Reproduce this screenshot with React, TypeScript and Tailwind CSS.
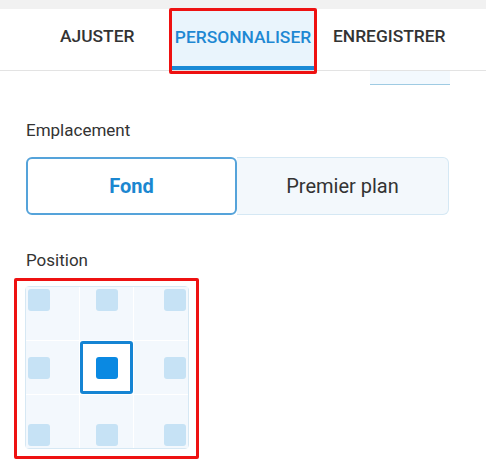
const cells = [
  'justify-start items-start',
  'justify-center items-start',
  'justify-end items-start',
  'justify-start items-center',
  'justify-center items-center',
  'justify-end items-center',
  'justify-start items-end',
  'justify-center items-end',
  'justify-end items-end',
];

export default function App() {
  return (
    <div className="relative w-[486px] h-[470px] overflow-hidden bg-white font-['Roboto',sans-serif] text-[#333]">
      <div className="h-[9px] bg-[#f1f1f1]" />

      {/* tabs */}
      <div className="flex h-[62px] items-stretch border-b border-[#e3e3e3] text-[17.4px] font-medium">
        <div className="ml-[60px] flex w-[74px] items-center pb-[6px]">AJUSTER</div>
        <div className="ml-[38px] mt-[2px] flex w-[142px] items-center justify-center border-b-4 border-[#1a8ad6] bg-[#e9f4fc] pb-[2px] text-[#1e88d3]">
          PERSONNALISER
        </div>
        <div className="ml-[19px] flex items-center pb-[6px]">ENREGISTRER</div>
      </div>

      <div className="ml-[370px] h-[14px] w-[80px] border-b border-[#9fcbe3] bg-[#f3f9fe]" />

      <div className="px-[26px]">
        <p className="mt-[35px] text-[17px] leading-[20px]">Emplacement</p>

        <div className="mt-[17px] flex h-[58px] w-[423px]">
          <button className="flex w-[211px] items-center justify-center rounded-[6px] border-2 border-[#55a3da] bg-white text-[20px] font-bold text-[#1b87d0]">
            Fond
          </button>
          <button className="flex flex-1 items-center justify-center rounded-r-[6px] border border-l-0 border-[#d5e8f4] bg-[#f3f8fc] text-[20px] text-[#333]">
            Premier plan
          </button>
        </div>

        <p className="mt-[35px] text-[17px] leading-[20px]">Position</p>
      </div>

      <div className="ml-[25px] mt-[16px] grid w-[164px] grid-cols-[53px_53px_54px] grid-rows-[53px_53px_53px] gap-px rounded-[4px] border border-[#d6e8f4] bg-white">
        {cells.map((c, i) =>
          i === 4 ? (
            <div key={i} className="flex items-center justify-center rounded-[3px] border-[3px] border-[#1584d3] bg-white">
              <div className="h-[22px] w-[22px] rounded-[3px] bg-[#0a89e2]" />
            </div>
          ) : (
            <div key={i} className={`flex bg-[#f3f8fd] p-[2px] ${c}`}>
              <div className="h-[22px] w-[22px] rounded-[3px] bg-[#c6e2f5]" />
            </div>
          )
        )}
      </div>

      {/* highlight overlays */}
      <div className="absolute left-[169px] top-[8px] h-[66px] w-[148px] rounded-[2px] border-[3px] border-[#ee1111]" />
      <div className="absolute left-[14px] top-[278px] h-[181px] w-[185px] rounded-[2px] border-[3px] border-[#ee1111]" />
    </div>
  );
}
